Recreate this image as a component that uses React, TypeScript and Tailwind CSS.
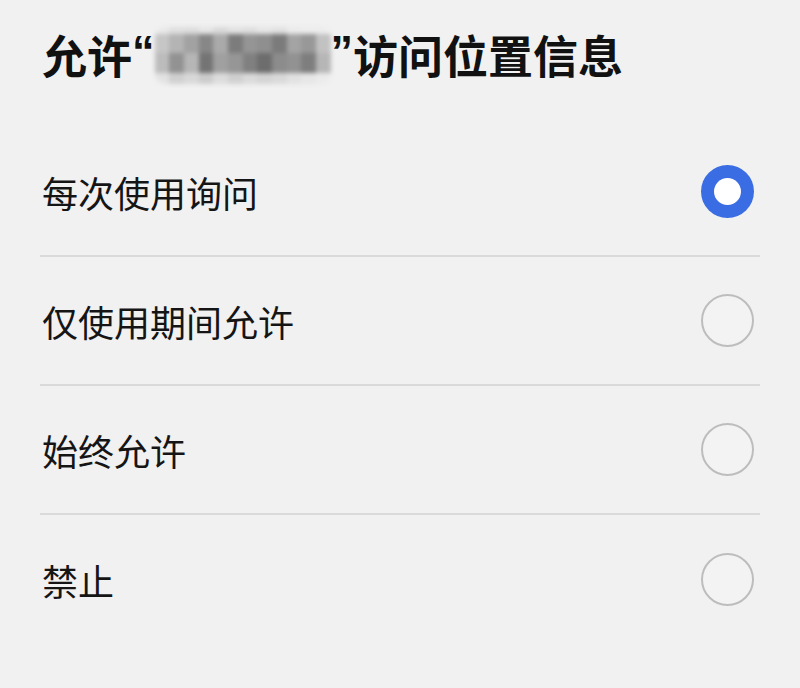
import React, { useState } from "react";

const options = ["每次使用询问", "仅使用期间允许", "始终允许", "禁止"];

// pixelated stand-in for the masked app name
const blurCells = [
  ["#e8e8e8", "#dedede", "#dcdcdc", "#e4e4e4", "#d8d8d8", "#e0e0e0", "#dddddd", "#e5e5e5", "#e0e0e0", "#eaeaea", "#ececec", "#ececec"],
  ["#c6c6c6", "#b4b4b4", "#a2a2a2", "#878787", "#aaaaaa", "#7c7c7c", "#959595", "#8f8f8f", "#7b7b7b", "#a4a4a4", "#989898", "#c2c2c2"],
  ["#bcbcbc", "#929292", "#b6b6b6", "#747474", "#a0a0a0", "#969696", "#808080", "#6d6d6d", "#8c8c8c", "#929292", "#7e7e7e", "#b6b6b6"],
  ["#e2e2e2", "#d0d0d0", "#d8d8d8", "#cccccc", "#dcdcdc", "#d0d0d0", "#dadada", "#d4d4d4", "#d9d9d9", "#e1e1e1", "#e6e6e6", "#ebebeb"],
];
const rowHeights = ["h-[7px]", "h-[19px]", "h-[20px]", "h-[11px]"];

function Radio({ checked }: { checked: boolean }) {
  return checked ? (
    <div className="w-[53px] h-[53px] rounded-full bg-[#3a6de3] flex items-center justify-center">
      <div className="w-[27px] h-[27px] rounded-full bg-white" />
    </div>
  ) : (
    <div className="w-[53px] h-[53px] rounded-full border-2 border-[#bdbdbd] bg-[#f3f3f3]" />
  );
}

export default function App() {
  const [selected, setSelected] = useState(0);

  return (
    <div
      className="w-[800px] h-[688px] bg-[#f1f1f1] overflow-hidden"
      style={{ fontFamily: '"Noto Sans CJK SC", "Noto Sans", sans-serif' }}
    >
      {/* Title */}
      <div className="h-[128px] pl-[42px] pt-[25px]">
        <h1 className="flex items-center text-[45px] leading-[60px] font-bold text-[#111]">
          <span>允许</span>
          <span className="font-['Liberation_Sans'] leading-none -mt-[8px]">“</span>
          <span className="w-[176px] flex flex-col blur-[2px] rounded-[10px] overflow-hidden">
            {blurCells.map((row, i) => (
              <div key={i} className={"flex " + rowHeights[i]}>
                {row.map((c, j) => (
                  <div key={j} className="flex-1" style={{ backgroundColor: c }} />
                ))}
              </div>
            ))}
          </span>
          <span className="font-['Liberation_Sans'] leading-none -mt-[8px]">”</span>
          <span>访问位置信息</span>
        </h1>
      </div>

      {/* Options */}
      <div className="px-[40px]">
        {options.map((label, i) => (
          <div
            key={label}
            onClick={() => setSelected(i)}
            className={
              "h-[129px] flex items-center justify-between pl-[2px] pr-[6px] cursor-pointer " +
              (i < options.length - 1 ? "border-b-2 border-[#dadada]" : "")
            }
          >
            <span className="text-[36px] text-[#151515] font-normal">{label}</span>
            <Radio checked={selected === i} />
          </div>
        ))}
      </div>
    </div>
  );
}
